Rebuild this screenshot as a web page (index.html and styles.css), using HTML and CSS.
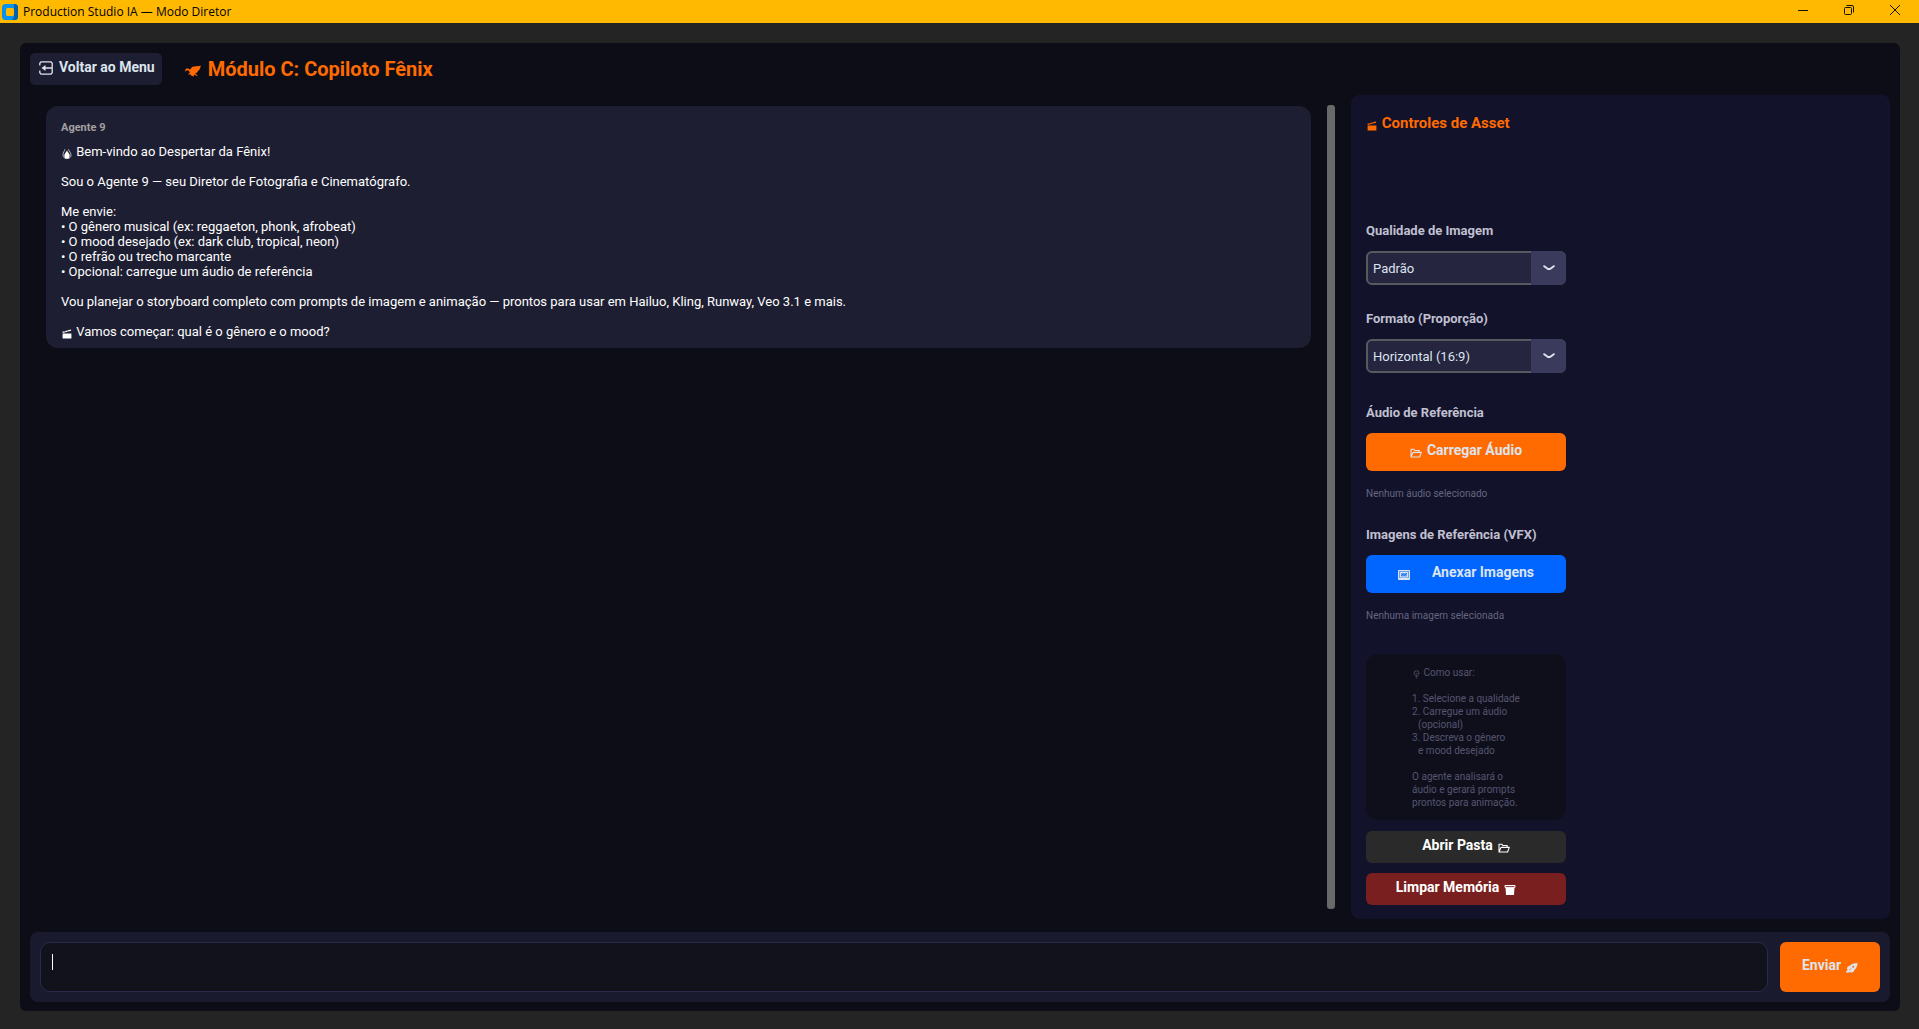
FILE: index.html
```html
<!DOCTYPE html>
<html lang="pt-BR">
<head>
<meta charset="utf-8">
<meta name="viewport" content="width=device-width, initial-scale=1">
<title>Production Studio IA — Modo Diretor</title>
<link rel="stylesheet" href="styles.css">
</head>
<body>
<svg class="sprite" aria-hidden="true">
  <symbol id="clapper" viewBox="0 0 10 10"><path fill="currentColor" d="M.6 4.6H9.4V9.4H.6zM.4 2.800 8.800.4l.4 1.400L.8 4.100z"/><path stroke="var(--cut)" stroke-width=".7" d="m2.600 2.200 1 1.200M5.200 1.400l1 1.200"/></symbol>
  <symbol id="folder" viewBox="0 0 12 10"><path fill="none" stroke="currentColor" stroke-width="1.100" stroke-linejoin="round" d="M1 9V1.300h3l.8 1.200h4.400v1.700M1 9l2-4.600h8.300L9.600 9z"/></symbol>
</svg>

<header class="titlebar">
  <svg class="logo" viewBox="0 0 16 16" aria-hidden="true"><rect width="16" height="16" rx="3.5" fill="#0a93ec"/><path d="M12 0h.5A3.5 3.5 0 0 1 16 3.500v9a3.500 3.500 0 0 1-3.500 3.500H10l2-3z" fill="#0560b0"/><rect x="4" y="4" width="8" height="8" rx="1.500" fill="#ffb900"/></svg>
  <span class="titlebar-name">Production Studio IA — Modo Diretor</span>
  <button class="win" type="button" aria-label="Minimizar"><svg viewBox="0 0 10 10"><path d="M0 5.500h10"/></svg></button>
  <button class="win" type="button" aria-label="Restaurar"><svg viewBox="0 0 10 10"><rect x=".5" y="2.500" width="7" height="7" rx="1"/><path d="M2.500.5H8A1.500 1.500 0 0 1 9.500 2v5.500"/></svg></button>
  <button class="win" type="button" aria-label="Fechar"><svg viewBox="0 0 10 10"><path d="m0 0 10 10M10 0 0 10"/></svg></button>
</header>

<div class="app">
  <div class="topbar">
    <button class="back" type="button">
      <svg viewBox="0 0 14 14" width="14" height="14" aria-hidden="true"><path fill="none" stroke="currentColor" stroke-width="1.300" d="M.8 4.500V2.300L2 .8h10l1.200 1.500v9.400L12 13.200H2L.8 11.700V9.500M13 7H4"/><path fill="currentColor" d="M2.500 7 6.500 4v6z"/></svg>
      Voltar ao Menu
    </button>
    <h1 class="title">
      <svg viewBox="0 0 16 12" width="16" height="12" aria-hidden="true"><path fill="currentColor" d="M0 5 1.500 3.400 3.500 3.600 5 4.800 7 2 9 1.400 16 .8 15.200 2.800 14.600 4.400 13 6 12.200 7.600 10.200 8.300 13 11 10.800 10.600 9.200 9.500 8.600 11.600 6.500 10.700 5.200 9.200 2.800 9.600 5 7.500 3.500 5.400 1.600 5.200.8 6.800z"/></svg>
      Módulo C: Copiloto Fênix
    </h1>
  </div>

  <main class="work">
    <section class="chat">
      <article class="bubble">
        <h2 class="author">Agente 9</h2>
        <p><svg class="mini" viewBox="0 0 10 10" aria-hidden="true"><path fill="none" stroke="currentColor" stroke-width=".9" opacity=".75" d="M3 .3C2.500 2 1 3.500 1 6c0 2.300 1.600 3.600 4 3.600S9 8.300 9 6C9 3.500 7 2.500 6.500.3"/><path fill="currentColor" d="M5 1.200c.3 2 2.700 2.800 2.700 5.200C7.700 8.600 6.500 9.600 5 9.600S2.300 8.600 2.300 6.400C2.300 4 4.600 3.200 5 1.200z"/></svg> Bem-vindo ao Despertar da Fênix!</p>
        <p>Sou o Agente 9 — seu Diretor de Fotografia e Cinematógrafo.</p>
        <p>Me envie:<br>• O gênero musical (ex: reggaeton, phonk, afrobeat)<br>• O mood desejado (ex: dark club, tropical, neon)<br>• O refrão ou trecho marcante<br>• Opcional: carregue um áudio de referência</p>
        <p>Vou planejar o storyboard completo com prompts de imagem e animação — prontos para usar em Hailuo, Kling, Runway, Veo 3.1 e mais.</p>
        <p><svg class="mini" aria-hidden="true"><use href="#clapper"/></svg> Vamos começar: qual é o gênero e o mood?</p>
      </article>
    </section>
    <div class="scroll" aria-hidden="true"></div>

    <aside class="panel">
      <h2 class="panel-title"><svg class="mini" aria-hidden="true"><use href="#clapper"/></svg> Controles de Asset</h2>

      <div class="group">
        <label class="label" for="quality">Qualidade de Imagem</label>
        <div class="combo">
          <select id="quality"><option>Padrão</option></select>
          <span class="combo-arrow"><svg viewBox="0 0 12 6" aria-hidden="true"><path d="M1.200 1.200 5 4h2l3.800-2.800"/></svg></span>
        </div>
      </div>

      <div class="group">
        <label class="label" for="format">Formato (Proporção)</label>
        <div class="combo">
          <select id="format"><option>Horizontal (16:9)</option></select>
          <span class="combo-arrow"><svg viewBox="0 0 12 6" aria-hidden="true"><path d="M1.200 1.200 5 4h2l3.800-2.800"/></svg></span>
        </div>
      </div>

      <div class="group">
        <h3 class="label">Áudio de Referência</h3>
        <button class="btn btn-audio" type="button"><svg aria-hidden="true"><use href="#folder"/></svg> Carregar Áudio</button>
        <p class="status">Nenhum áudio selecionado</p>
      </div>

      <div class="group">
        <h3 class="label">Imagens de Referência (VFX)</h3>
        <button class="btn btn-image" type="button"><svg viewBox="0 0 12 10" aria-hidden="true"><path fill="currentColor" opacity=".45" d="M.5.500h11v9H.5z"/><path fill="none" stroke="currentColor" d="M.5.500h11v9H.5zM2.500 2.500h7v4.500h-7zM1 8.500h10"/><path fill="none" stroke="#0066ff" stroke-width=".8" d="m3 5.800 2-1.500 1.500 1L9 3.300"/></svg> Anexar Imagens</button>
        <p class="status">Nenhuma imagem selecionada</p>
      </div>

      <div class="help">
        <div>
          <p><svg class="mini" viewBox="0 0 10 10" aria-hidden="true"><path fill="none" stroke="currentColor" stroke-width=".9" d="M3.700 6.500C2.600 5.700 2.300 5 2.300 4a2.700 2.700 0 0 1 5.400 0c0 1-.3 1.700-1.400 2.500zM4 8h2M4.300 9.300h1.400M4.200 4l.8 1 .8-1"/></svg> Como usar:</p>
          <ol>
            <li>Selecione a qualidade</li>
            <li>Carregue um áudio<br><span>(opcional)</span></li>
            <li>Descreva o gênero<br><span>e mood desejado</span></li>
          </ol>
          <p>O agente analisará o<br>áudio e gerará prompts<br>prontos para animação.</p>
        </div>
      </div>

      <button class="btn btn-open" type="button">Abrir Pasta <svg aria-hidden="true"><use href="#folder"/></svg></button>
      <button class="btn btn-clear" type="button">Limpar Memória <svg viewBox="0 0 12 10" aria-hidden="true"><path fill="none" stroke="currentColor" d="M1 .5h10v1.800H1z"/><path fill="currentColor" d="M1.500 2.500h9L10 10H2z"/></svg></button>
    </aside>
  </main>

  <form class="composer">
    <div class="entry">
      <textarea aria-label="Mensagem" rows="1"></textarea>
      <span class="caret" aria-hidden="true"></span>
    </div>
    <button class="btn send" type="button">Enviar <svg viewBox="0 0 12 10" aria-hidden="true"><path fill="currentColor" d="M11.500 0C8 0 5.500 1 4 2.600L1.500 3.800.8 6.200l1.200.2L.4 8.200 0 9.800l3-.3 1.500-.7.3 1 2.500-.8 1.500-2.400C10.200 5.200 11.500 3 11.500 0z"/><circle cx="7.200" cy="3.800" r="1" fill="#ff6b00"/><path stroke="#ff6b00" stroke-width=".7" d="m3 7.500 2.500-2.300"/></svg></button>
  </form>
</div>
</body>
</html>
```
FILE: styles.css
```css
* { box-sizing: border-box; }

body {
  margin: 0;
  min-height: 100vh;
  display: flex;
  flex-direction: column;
  background: #242424;
  color: #fff;
  font: 13px/15px Roboto, sans-serif;
}

h1, h2, h3, p, ol { margin: 0; padding: 0; }
button, select, textarea { font: inherit; color: inherit; border: 0; margin: 0; }
button { cursor: pointer; }
svg { flex: none; }
.sprite { display: none; }

/* Window title bar */
.titlebar {
  height: 23px;
  padding: 0 1px 0 2px;
  display: flex;
  align-items: center;
  background: #ffb900;
  color: #000;
}
.logo { width: 16px; height: 16px; }
.titlebar-name { flex: 1; padding-left: 5px; font: 12px/16px "Open Sans", sans-serif; }
.win {
  width: 46px;
  height: 20px;
  padding: 0;
  display: grid;
  place-items: center;
  align-self: flex-start;
  background: none;
}
.win svg { width: 10px; height: 10px; overflow: visible; fill: none; stroke: #1a1200; }

/* Application frame */
.app {
  flex: 1;
  margin: 20px 19px 18px 20px;
  padding: 10px 10px 9px;
  display: flex;
  flex-direction: column;
  border-radius: 6px;
  background: #0d0d17;
}
.topbar { display: flex; align-items: center; gap: 23px; }
.back {
  height: 32px;
  padding: 0 7px 3px 9px;
  display: flex;
  align-items: center;
  gap: 6px;
  border-radius: 5px;
  background: #1e1e32;
  color: #dce4ee;
  font-size: 14px;
  font-weight: 700;
}
.title { display: flex; align-items: center; gap: 7px; font-size: 20px; line-height: 24px; color: #ff6b00; }
.title svg { margin-top: 4px; }

.work {
  flex: 1;
  padding: 10px 0 13px;
  display: grid;
  grid-template-columns: minmax(0, 1fr) 8px 539px;
  column-gap: 16px;
}

/* Conversation */
.chat { padding: 11px 0 0 16px; }
.bubble {
  --cut: #1e1e32;
  padding: 15px 15px 9px;
  display: flex;
  flex-direction: column;
  gap: 15px;
  border-radius: 12px;
  background: #1e1e32;
}
.author { margin-bottom: -6px; font-size: 11px; line-height: 14px; color: #a0a0a0; }
.mini { width: 12px; height: 10px; vertical-align: -3px; }
.scroll { margin: 10px 0; border-radius: 3px; background: #696969; }

/* Asset controls */
.panel {
  --cut: #12122a;
  padding: 20px 15px 14px;
  display: flex;
  flex-direction: column;
  align-items: flex-start;
  border-radius: 8px;
  background: #12122a;
}
.panel-title { margin-bottom: 92px; font-size: 15px; line-height: 16px; color: #ff6b00; }
.group { width: 200px; display: flex; flex-direction: column; }
.group + .group { margin-top: 26px; }
.group:nth-of-type(3) { margin-top: 32px; }
.label { margin-bottom: 12px; font-size: 13px; font-weight: 700; line-height: 16px; color: #c0c0d0; }
.combo { display: grid; }
.combo > * { grid-area: 1 / 1; }
.combo select {
  height: 34px;
  padding: 0 40px 0 5px;
  appearance: none;
  border: 2px solid #565b5e;
  border-radius: 6px;
  background: #25253f;
  color: #dce4ee;
}
.combo-arrow {
  width: 35px;
  justify-self: end;
  display: grid;
  place-items: center;
  border-radius: 0 6px 6px 0;
  background: #3a3a5c;
  pointer-events: none;
}
.combo-arrow svg { width: 12px; height: 6px; overflow: visible; fill: none; stroke: #dce4ee; stroke-width: 2; stroke-linecap: round; stroke-linejoin: round; }

.btn {
  width: 200px;
  height: 38px;
  padding: 0 0 3px;
  display: flex;
  align-items: center;
  justify-content: center;
  gap: 5px;
  border-radius: 6px;
  font-size: 14px;
  font-weight: 700;
}
.btn svg { width: 12px; height: 10px; margin-top: 4px; }
.btn-audio { background: #ff6b00; color: #dce4ee; }
.btn-image { gap: 22px; background: #0066ff; color: #dce4ee; }
.btn-open, .btn-clear { height: 32px; }
.btn-open { margin-top: 11px; background: #2a2a2a; }
.btn-clear { margin-top: 10px; padding-right: 20px; background: #7a1f1f; }
.status { margin-top: 15px; font-size: 10px; line-height: 15px; color: #666680; }

.help {
  width: 200px;
  margin-top: 31px;
  padding: 12px 0 11px;
  display: flex;
  justify-content: center;
  border-radius: 12px;
  background: #0f0f1c;
  color: #555570;
  font-size: 10px;
  line-height: 13px;
}
.help ol { margin: 13px 0; list-style: none; counter-reset: step; }
.help li { counter-increment: step; }
.help li::before { content: counter(step) ". "; }
.help li span { padding-left: 6px; }
.help .mini { width: 9px; }

/* Message composer */
.composer {
  padding: 10px;
  display: flex;
  gap: 12px;
  border-radius: 8px;
  background: #1a1a2e;
}
.entry { flex: 1; display: grid; position: relative; }
.entry textarea {
  height: 50px;
  padding: 10px 12px;
  resize: none;
  outline: 0;
  border: 1px solid #2a2a4a;
  border-radius: 10px;
  background: #12121c;
}
.caret { position: absolute; left: 12px; top: 12px; width: 1px; height: 16px; background: #fff; }
.send { width: 100px; height: 50px; background: #ff6b00; color: #dce4ee; }
```
